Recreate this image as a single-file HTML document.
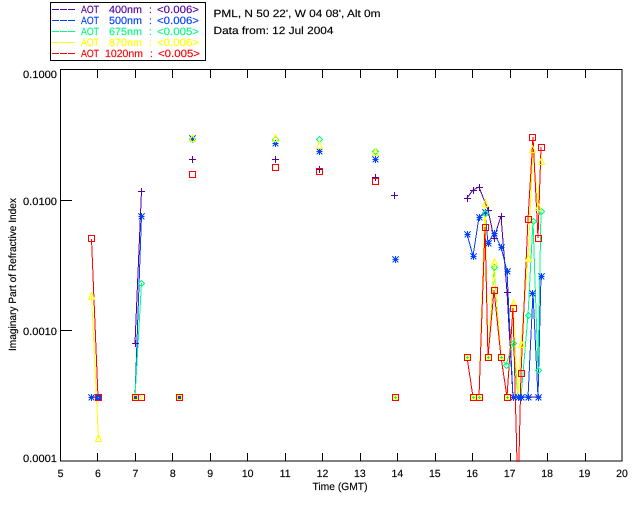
<!DOCTYPE html>
<html>
<head>
<meta charset="utf-8">
<style>
html,body{margin:0;padding:0;background:#fff;width:640px;height:512px;overflow:hidden}
svg{display:block}
text{font-family:"Liberation Sans",sans-serif;font-size:10.5px;fill:#000;stroke:#000;stroke-width:.15}
text.v{fill:#5500a0;stroke:#5500a0}
text.b{fill:#0040ff;stroke:#0040ff}
text.g{fill:#00ff80;stroke:#00ff80}
text.y{fill:#ffff00;stroke:#ffff00}
text.e{fill:#ff0000;stroke:#ff0000}
.c{text-anchor:middle}
.r{text-anchor:end}
.a{stroke:#000;stroke-width:1;fill:none}
.d{fill:none;stroke-width:1}
</style>
</head>
<body>
<svg width="640" height="512" viewBox="0 0 640 512" xmlns="http://www.w3.org/2000/svg" shape-rendering="crispEdges">
<defs>
<clipPath id="p"><rect x="60" y="70" width="563" height="392"/></clipPath>
<g id="pl"><path d="M-3.5 0H3.500M0 -3.500V3.500" fill="none" stroke="#5500a0" stroke-width="1"/></g>
<g id="as"><path d="M-3 0H3M0 -3.500V3.500M-3 -3L3 3M-3 3L3 -3" fill="none" stroke="#0040ff" stroke-width="1"/><rect x="-1.500" y="-1.500" width="3" height="3" fill="#0040ff"/></g>
<g id="di"><path d="M0 -3L3 0L0 3L-3 0Z" fill="none" stroke="#00ff80" stroke-width="1"/></g>
<g id="tr"><path d="M0 -4L3 3H-3Z" fill="none" stroke="#ffff00" stroke-width="1"/></g>
<g id="sq"><rect x="-3" y="-3" width="6" height="6" fill="none" stroke="#ff0000" stroke-width="1"/></g>
<g id="cb"><rect x="-2.500" y="-2.500" width="5" height="5" fill="#ffff00"/><rect x="-1.500" y="-1.500" width="3" height="3" fill="#0040ff"/></g>
<g id="cy"><rect x="-2.500" y="-2.500" width="5" height="5" fill="#ffff80"/><rect x="-2.500" y="-2.500" width="2" height="1" fill="#ffff00"/><rect x="0.500" y="1.500" width="2" height="1" fill="#ffff00"/><rect x="-1.500" y="-0.500" width="3" height="1" fill="#00ff80"/><rect x="-0.500" y="-1.500" width="1" height="3" fill="#00ff80"/></g>
<g id="cw"><rect x="-1.500" y="-1.500" width="1" height="1" fill="#ffff00"/><rect x="0.500" y="-1.500" width="1" height="1" fill="#ffff00"/><rect x="-0.500" y="-0.500" width="1" height="1" fill="#ffff00"/><rect x="-1.500" y="0.500" width="3" height="1" fill="#ffff00"/></g>
<g id="cd"><rect x="-2.500" y="-2.500" width="5" height="5" fill="#0040ff"/><rect x="-0.500" y="-0.500" width="1" height="1" fill="#00ff80"/></g>
</defs>

<!-- legend -->
<rect x="50.5" y="2.5" width="155" height="58" class="a"/>
<path d="M52 9.500H75" stroke="#5500a0" stroke-dasharray="7 1" fill="none"/>
<path d="M52 20.500H75" stroke="#0040ff" stroke-dasharray="7 1" fill="none"/>
<path d="M52 31.500H75" stroke="#00ff80" stroke-dasharray="7 1" fill="none"/>
<path d="M52 42.500H75" stroke="#ffff00" stroke-dasharray="7 1" fill="none"/>
<path d="M52 53.500H75" stroke="#ff0000" stroke-dasharray="7 1" fill="none"/>
<g text-rendering="geometricPrecision">
<text x="81" y="13" class="v" textLength="18" lengthAdjust="spacingAndGlyphs">AOT</text>
<text x="109" y="13" class="v" textLength="33" lengthAdjust="spacingAndGlyphs">400nm</text>
<text x="149" y="13" class="v">:</text>
<text x="157" y="13" class="v" textLength="42" lengthAdjust="spacingAndGlyphs">&lt;0.006&gt;</text>
<text x="81" y="24" class="b" textLength="18" lengthAdjust="spacingAndGlyphs">AOT</text>
<text x="109" y="24" class="b" textLength="33" lengthAdjust="spacingAndGlyphs">500nm</text>
<text x="149" y="24" class="b">:</text>
<text x="157" y="24" class="b" textLength="42" lengthAdjust="spacingAndGlyphs">&lt;0.006&gt;</text>
<text x="81" y="35" class="g" textLength="18" lengthAdjust="spacingAndGlyphs">AOT</text>
<text x="109" y="35" class="g" textLength="33" lengthAdjust="spacingAndGlyphs">675nm</text>
<text x="149" y="35" class="g">:</text>
<text x="157" y="35" class="g" textLength="42" lengthAdjust="spacingAndGlyphs">&lt;0.005&gt;</text>
<text x="81" y="46" class="y" textLength="18" lengthAdjust="spacingAndGlyphs">AOT</text>
<text x="109" y="46" class="y" textLength="33" lengthAdjust="spacingAndGlyphs">870nm</text>
<text x="149" y="46" class="y">:</text>
<text x="157" y="46" class="y" textLength="42" lengthAdjust="spacingAndGlyphs">&lt;0.006&gt;</text>
<text x="81" y="57" class="e" textLength="18" lengthAdjust="spacingAndGlyphs">AOT</text>
<text x="105" y="57" class="e" textLength="38" lengthAdjust="spacingAndGlyphs">1020nm</text>
<text x="150" y="57" class="e">:</text>
<text x="158" y="57" class="e" textLength="42" lengthAdjust="spacingAndGlyphs">&lt;0.005&gt;</text>

<text x="213.500" y="17" textLength="167" lengthAdjust="spacingAndGlyphs">PML, N 50 22', W 04 08', Alt 0m</text>
<text x="213.500" y="34" textLength="120" lengthAdjust="spacingAndGlyphs">Data from: 12 Jul 2004</text>

<!-- y labels -->
<text x="57" y="78" class="r" textLength="34" lengthAdjust="spacingAndGlyphs">0.1000</text>
<text x="57" y="205" class="r" textLength="34" lengthAdjust="spacingAndGlyphs">0.0100</text>
<text x="57" y="335" class="r" textLength="34" lengthAdjust="spacingAndGlyphs">0.0010</text>
<text x="57" y="462" class="r" textLength="34" lengthAdjust="spacingAndGlyphs">0.0001</text>
<text transform="translate(16,351) rotate(-90)" textLength="153" lengthAdjust="spacingAndGlyphs">Imaginary Part of Refractive Index</text>

<!-- x labels -->
<text x="60.500" y="477" class="c">5</text>
<text x="97.900" y="477" class="c">6</text>
<text x="135.400" y="477" class="c">7</text>
<text x="172.800" y="477" class="c">8</text>
<text x="210.200" y="477" class="c">9</text>
<text x="247.700" y="477" class="c">10</text>
<text x="285.100" y="477" class="c">11</text>
<text x="322.500" y="477" class="c">12</text>
<text x="359.900" y="477" class="c">13</text>
<text x="397.400" y="477" class="c">14</text>
<text x="434.800" y="477" class="c">15</text>
<text x="472.200" y="477" class="c">16</text>
<text x="509.700" y="477" class="c">17</text>
<text x="547.100" y="477" class="c">18</text>
<text x="584.500" y="477" class="c">19</text>
<text x="622" y="477" class="c">20</text>
<text x="340" y="490" class="c" textLength="55" lengthAdjust="spacingAndGlyphs">Time (GMT)</text>
</g>

<!-- axes -->
<rect x="60.500" y="69.500" width="561.500" height="391.500" class="a"/>
<path class="a" d="M60 200.500H72M60 330.500H72
M97.500 70V78M135.500 70V78M172.500 70V78M210.500 70V78M247.500 70V78M285.500 70V78M322.500 70V78M360.500 70V78M397.500 70V78M435.500 70V78M472.500 70V78M510.500 70V78M547.500 70V78M585.500 70V78
M97.500 453V461M135.500 453V461M172.500 453V461M210.500 453V461M247.500 453V461M285.500 453V461M322.500 453V461M360.500 453V461M397.500 453V461M435.500 453V461M472.500 453V461M510.500 453V461M547.500 453V461M585.500 453V461"/>

<!-- data lines -->
<g clip-path="url(#p)">
<g stroke="#5500a0" class="d">
<polyline points="135,343 141.500,191"/>
<polyline points="467,198 473,190 479,187 488,210 494,238 501,216 507,292 513,397 541,397"/>
</g>
<g stroke="#0040ff" class="d">
<polyline points="135,397 141.500,216"/>
<polyline points="91,397 98,397"/>
<polyline points="467,234 473,256 479,217 485,212 488,243 494,233 501,247 507,271 513,397 518,397 521,397 528,397 533,293 538,397 541,276"/>
</g>
<g stroke="#00ff80" class="d">
<polyline points="135,397 141.500,283"/>
<polyline points="485,213 488,357 494,267 501,357 506,365 513,343 518,397 521,397 528,315 533,221 538,370 541,211"/>
</g>
<g stroke="#ffff00" class="d">
<polyline points="91.500,296 98.500,439"/>
<polyline points="479,397 485,203 488,357 494,262 501,357 507,397 513,303 518,397 521,344 528,258 533,149 538,207 541,161"/>
</g>
<g stroke="#ff0000" class="d">
<polyline points="91.500,239 98,397"/>
<polyline points="467,357 473,397"/>
<polyline points="479,397 485,227 488,357 494,290 501,357 507,397 513,308 518,500 521,373 528,219 533,137 538,238 541,147"/>
</g>
</g>

<!-- purple plus markers -->
<use href="#pl" x="135.500" y="343.500"/><use href="#pl" x="141.500" y="191.500"/><use href="#pl" x="192.500" y="159.500"/><use href="#pl" x="275.500" y="159.500"/><use href="#pl" x="319.500" y="169.500"/><use href="#pl" x="375.500" y="177.500"/><use href="#pl" x="394.500" y="195.500"/>
<use href="#pl" x="467.500" y="198.500"/><use href="#pl" x="473.500" y="190.500"/><use href="#pl" x="479.500" y="187.500"/><use href="#pl" x="488.500" y="210.500"/><use href="#pl" x="494.500" y="238.500"/><use href="#pl" x="501.500" y="216.500"/><use href="#pl" x="507.500" y="292.500"/>

<!-- blue asterisks -->
<use href="#as" x="91.500" y="397.500"/><use href="#as" x="141.500" y="216.500"/><use href="#as" x="192.500" y="138.500"/><use href="#as" x="275.500" y="143.500"/><use href="#as" x="319.500" y="151.500"/><use href="#as" x="375.500" y="159.500"/><use href="#as" x="395.500" y="259.500"/>
<use href="#as" x="467.500" y="234.500"/><use href="#as" x="473.500" y="256.500"/><use href="#as" x="479.500" y="217.500"/><use href="#as" x="485.500" y="212.500"/><use href="#as" x="488.500" y="243.500"/><use href="#as" x="494.500" y="233.500"/><use href="#as" x="501.500" y="247.500"/><use href="#as" x="507.500" y="271.500"/><use href="#as" x="513.500" y="397.500"/><use href="#as" x="518.500" y="397.500"/><use href="#as" x="521.500" y="397.500"/><use href="#as" x="528.500" y="397.500"/><use href="#as" x="532.500" y="293.500"/><use href="#as" x="538.500" y="397.500"/><use href="#as" x="541.500" y="276.500"/>

<!-- green diamonds -->
<use href="#di" x="141.500" y="283.500"/><use href="#di" x="192.500" y="139.500"/><use href="#di" x="275.500" y="139.500"/><use href="#di" x="319.500" y="139.500"/><use href="#di" x="375.500" y="151.500"/>
<use href="#di" x="485.500" y="213.500"/><use href="#di" x="494.500" y="267.500"/><use href="#di" x="506.500" y="365.500"/><use href="#di" x="513.500" y="343.500"/><use href="#di" x="528.500" y="315.500"/><use href="#di" x="533.500" y="221.500"/><use href="#di" x="538.500" y="370.500"/><use href="#di" x="541.500" y="211.500"/>

<!-- yellow triangles -->
<use href="#tr" x="91.500" y="296.500"/><use href="#tr" x="98.500" y="438.500"/><use href="#tr" x="192.500" y="138.500"/><use href="#tr" x="275.500" y="138.500"/><use href="#tr" x="319.500" y="145.500"/><use href="#tr" x="375.500" y="152.500"/>
<use href="#tr" x="485.500" y="203.500"/><use href="#tr" x="494.500" y="262.500"/><use href="#tr" x="513.500" y="303.500"/><use href="#tr" x="521.500" y="344.500"/><use href="#tr" x="528.500" y="258.500"/><use href="#tr" x="532.500" y="149.500"/><use href="#tr" x="538.500" y="207.500"/><use href="#tr" x="541.500" y="161.500"/>

<!-- stacked points at the lower limit, seen inside the red squares -->
<use href="#cd" x="98.500" y="397.500"/>
<use href="#cb" x="135.500" y="397.500"/>
<use href="#cw" x="141.500" y="397.500"/>
<use href="#cb" x="179.500" y="397.500"/>
<use href="#cy" x="395.500" y="397.500"/>
<use href="#cy" x="467.500" y="357.500"/><use href="#cy" x="473.500" y="397.500"/><use href="#cy" x="479.500" y="397.500"/><use href="#cy" x="488.500" y="357.500"/><use href="#cy" x="501.500" y="357.500"/><use href="#cy" x="507.500" y="397.500"/>

<!-- red squares -->
<use href="#sq" x="91.500" y="238.500"/><use href="#sq" x="98.500" y="397.500"/><use href="#sq" x="135.500" y="397.500"/><use href="#sq" x="141.500" y="397.500"/><use href="#sq" x="179.500" y="397.500"/><use href="#sq" x="192.500" y="174.500"/><use href="#sq" x="275.500" y="167.500"/><use href="#sq" x="319.500" y="171.500"/><use href="#sq" x="375.500" y="181.500"/><use href="#sq" x="395.500" y="397.500"/>
<use href="#sq" x="467.500" y="357.500"/><use href="#sq" x="473.500" y="397.500"/><use href="#sq" x="479.500" y="397.500"/><use href="#sq" x="485.500" y="227.500"/><use href="#sq" x="488.500" y="357.500"/><use href="#sq" x="494.500" y="290.500"/><use href="#sq" x="501.500" y="357.500"/><use href="#sq" x="507.500" y="397.500"/><use href="#sq" x="513.500" y="308.500"/><use href="#sq" x="521.500" y="373.500"/><use href="#sq" x="528.500" y="219.500"/><use href="#sq" x="532.500" y="137.500"/><use href="#sq" x="538.500" y="238.500"/><use href="#sq" x="541.500" y="147.500"/>
</svg>
</body>
</html>
